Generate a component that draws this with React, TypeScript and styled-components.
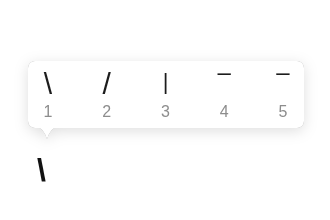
import styled, { createGlobalStyle } from "styled-components";

const GlobalStyle = createGlobalStyle`
  body {
    margin: 0;
    background: #ffffff;
    font-family: "Liberation Sans", Arial, sans-serif;
  }
`;

const Page = styled.div`
  width: 330px;
  height: 220px;
  padding: 61px 0 0 28px;
  box-sizing: border-box;
`;

const Bubble = styled.div`
  position: relative;
  width: 276px;
  filter: drop-shadow(0 0 0.6px rgba(0, 0, 0, 0.35)) drop-shadow(0 3px 7px rgba(0, 0, 0, 0.13));
`;

const Panel = styled.div`
  display: grid;
  grid-template-columns: repeat(5, 40px);
  column-gap: 18.75px;
  height: 67px;
  background: #ffffff;
  border-radius: 7px;
`;

const Tail = styled.svg`
  position: absolute;
  left: 8px;
  top: 66px;
`;

const Candidate = styled.div`
  display: flex;
  flex-direction: column;
  align-items: center;
`;

const GlyphBox = styled.div`
  height: 42px;
  width: 100%;
  display: flex;
  justify-content: center;
  align-items: flex-start;
  color: #1c1c1c;
`;

const Glyph = styled.span<{ $size: number; $top: number }>`
  display: block;
  height: 26px;
  font-size: ${(p) => p.$size}px;
  line-height: 26px;
  margin-top: ${(p) => p.$top}px;
`;

const Num = styled.div`
  font-size: 16px;
  line-height: 18px;
  color: #8d8d8d;
`;

const Typed = styled.div`
  margin: 26px 0 0 9px;
  font-size: 32px;
  font-weight: bold;
  line-height: 1;
  color: #111111;
  will-change: transform;
`;

const candidates = [
  { ch: "\\", size: 30, top: 10 },
  { ch: "/", size: 30, top: 10 },
  { ch: "|", size: 22, top: 8 },
  { ch: "–", size: 24, top: -2 },
  { ch: "–", size: 24, top: -2 },
];

const App = () => {
  return (
    <Page>
      <GlobalStyle />
      <Bubble>
        <Panel>
          {candidates.map((c, i) => (
            <Candidate key={i}>
              <GlyphBox>
                <Glyph $size={c.size} $top={c.top}>{c.ch}</Glyph>
              </GlyphBox>
              <Num>{i + 1}</Num>
            </Candidate>
          ))}
        </Panel>
        <Tail width="22" height="13" viewBox="0 0 22 13">
          <path d="M0 0 Q7 0 11 12 Q15 0 22 0 Z" fill="#ffffff" />
        </Tail>
      </Bubble>
      <Typed>\</Typed>
    </Page>
  );
};

export default App;
